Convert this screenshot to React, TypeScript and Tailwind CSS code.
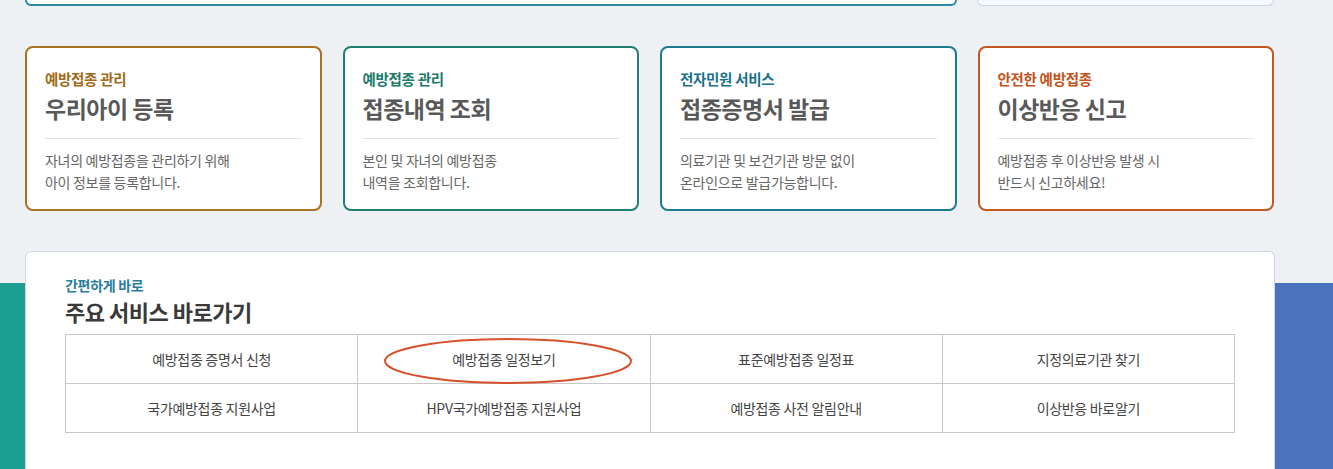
import React from "react";

const cards = [
  {
    label: "예방접종 관리",
    title: "우리아이 등록",
    desc: ["자녀의 예방접종을 관리하기 위해", "아이 정보를 등록합니다."],
    border: "border-[#a8731f]",
    text: "text-[#a06a18]",
  },
  {
    label: "예방접종 관리",
    title: "접종내역 조회",
    desc: ["본인 및 자녀의 예방접종", "내역을 조회합니다."],
    border: "border-[#1f7f70]",
    text: "text-[#1b7a6b]",
  },
  {
    label: "전자민원 서비스",
    title: "접종증명서 발급",
    desc: ["의료기관 및 보건기관 방문 없이", "온라인으로 발급가능합니다."],
    border: "border-[#1b7b92]",
    text: "text-[#17718a]",
  },
  {
    label: "안전한 예방접종",
    title: "이상반응 신고",
    desc: ["예방접종 후 이상반응 발생 시", "반드시 신고하세요!"],
    border: "border-[#c4561f]",
    text: "text-[#c4531c]",
  },
];

const links = [
  "예방접종 증명서 신청",
  "예방접종 일정보기",
  "표준예방접종 일정표",
  "지정의료기관 찾기",
  "국가예방접종 지원사업",
  "HPV국가예방접종 지원사업",
  "예방접종 사전 알림안내",
  "이상반응 바로알기",
];

export default function App() {
  return (
    <div
      className="w-[1333px] h-[469px] overflow-hidden bg-[#eef1f4]"
      style={{ fontFamily: '"Noto Sans CJK KR", "Noto Sans", sans-serif' }}
    >
      {/* top boxes (cut off) */}
      <div className="flex gap-[20px] pl-[25px] pr-[59px]">
        <div className="w-[932px] h-[6px] border-2 border-t-0 border-[#2a8aa3] rounded-b-[6px] bg-white" />
        <div className="flex-1 h-[6px] border border-t-0 border-[#c9d5e4] rounded-b-[6px] bg-[#f6f9fc]" />
      </div>

      {/* cards */}
      <div className="grid grid-cols-4 gap-[21px] pl-[25px] pr-[59px] mt-[40px]">
        {cards.map((c, i) => (
          <div
            key={i}
            className={`h-[165px] bg-white border-2 ${c.border} rounded-[8px] px-[18px] pt-[22px]`}
          >
            <div className={`text-[14.5px] font-bold leading-[18px] tracking-[-0.3px] ${c.text}`}>{c.label}</div>
            <div className="text-[23px] font-semibold leading-[30px] text-[#595959] mt-[5px] tracking-[-0.5px]">
              {c.title}
            </div>
            <div className="h-px bg-[#e2e4e7] mt-[15px]" />
            <div className="text-[14px] leading-[22px] text-[#666] mt-[10px] tracking-[-0.3px]">
              {c.desc.map((d, j) => (
                <div key={j}>{d}</div>
              ))}
            </div>
          </div>
        ))}
      </div>

      {/* quick links section */}
      <div className="mt-[40px] h-[218px] bg-[linear-gradient(to_bottom,#eef1f4_32px,transparent_32px),linear-gradient(to_right,#1c9e93_50%,#4a72bd_50%)]">
        <div className="ml-[25px] w-[1250px] h-full bg-white border border-b-0 border-[#d3d7dd] rounded-t-[6px] px-[39px] pt-[23px]">
          <div className="text-[14px] font-semibold leading-[20px] text-[#2a7d9c] tracking-[-0.3px]">
            간편하게 바로
          </div>
          <div className="mt-[2px] text-[22px] font-bold leading-[28px] text-[#3a3a3a] tracking-[-0.5px]">
            주요 서비스 바로가기
          </div>
          <div className="mt-[9px] w-[1170px] grid grid-cols-4 border-t border-l border-[#c8c8c8]">
            {links.map((l, i) => (
              <div
                key={i}
                className="relative h-[49px] flex items-center justify-center border-r border-b border-[#c8c8c8] text-[14px] text-[#444] tracking-[-0.3px]"
              >
                {l}
                {i === 1 && (
                  <svg
                    className="absolute left-[25px] top-[2px] pointer-events-none"
                    width="250"
                    height="48"
                    viewBox="0 0 250 48"
                  >
                    <ellipse cx="125" cy="24" rx="123" ry="22" fill="none" stroke="#d6502b" strokeWidth="2" />
                  </svg>
                )}
              </div>
            ))}
          </div>
        </div>
      </div>
    </div>
  );
}
